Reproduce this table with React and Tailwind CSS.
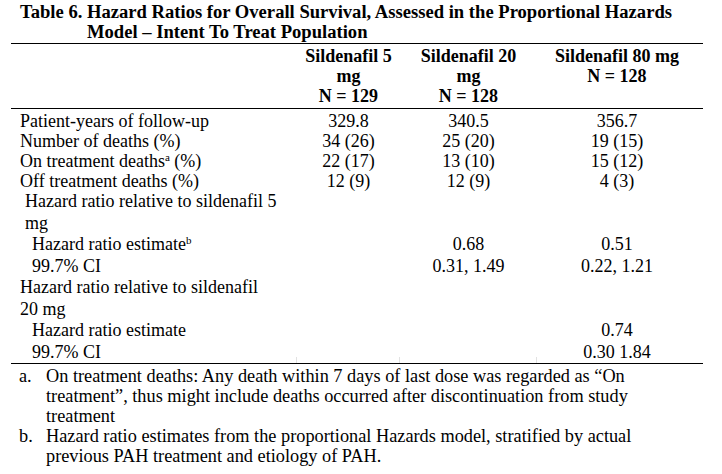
const rowsTop = [
  { label: "Patient-years of follow-up", v: ["329.8", "340.5", "356.7"] },
  { label: "Number of deaths (%)", v: ["34 (26)", "25 (20)", "19 (15)"] },
  { label: <>On treatment deaths<sup className="text-[11px] relative -top-[6px]">a</sup> (%)</>, v: ["22 (17)", "13 (10)", "15 (12)"] },
  { label: "Off treatment deaths (%)", v: ["12 (9)", "12 (9)", "4 (3)"] },
];

const Cell = ({ children }) => <div className="text-center">{children}</div>;

const App = () => {
  return (
    <div className="w-[722px] h-[474px] bg-white overflow-hidden text-black font-['Liberation_Serif','Times_New_Roman',serif] text-[18px]">
      <h1 className="font-bold text-[18.6px] leading-5 pt-[2px] whitespace-nowrap">
        <span className="block pl-[20px]">Table 6. Hazard Ratios for Overall Survival, Assessed in the Proportional Hazards</span>
        <span className="block pl-[87px]">Model – Intent To Treat Population</span>
      </h1>

      <div className="ml-[11px] w-[692px]">
        <div className="h-px bg-black mt-[1px]" />

        {/* header */}
        <div className="grid grid-cols-[286px_103px_137px_160px] font-bold leading-5 pt-[2px] pb-[2px]">
          <div />
          <Cell>Sildenafil 5<br />mg<br />N = 129</Cell>
          <Cell>Sildenafil 20<br />mg<br />N = 128</Cell>
          <Cell>Sildenafil 80 mg<br />N = 128</Cell>
        </div>
        <div className="h-px bg-black" />

        {/* body */}
        <div className="grid grid-cols-[286px_103px_137px_160px] leading-5 pt-[2px]">
          {rowsTop.map((r, i) => (
            <div key={i} className="contents">
              <div className="pl-[9px]">{r.label}</div>
              <Cell>{r.v[0]}</Cell>
              <Cell>{r.v[1]}</Cell>
              <Cell>{r.v[2]}</Cell>
            </div>
          ))}
        </div>
        <div className="grid grid-cols-[286px_103px_137px_160px] leading-[21.5px]">
          <div className="pl-[14px]">Hazard ratio relative to sildenafil 5<br />mg</div>
          <Cell />
          <Cell />
          <Cell />

          <div className="pl-[21px]">Hazard ratio estimate<sup className="text-[11px] relative -top-[6px]">b</sup></div>
          <Cell />
          <Cell>0.68</Cell>
          <Cell>0.51</Cell>

          <div className="pl-[21px]">99.7% CI</div>
          <Cell />
          <Cell>0.31, 1.49</Cell>
          <Cell>0.22, 1.21</Cell>

          <div className="pl-[9px]">Hazard ratio relative to sildenafil<br />20 mg</div>
          <Cell />
          <Cell />
          <Cell />

          <div className="pl-[21px]">Hazard ratio estimate</div>
          <Cell />
          <Cell />
          <Cell>0.74</Cell>

          <div className="pl-[21px] relative">
            99.7% CI
            <span className="absolute right-0 bottom-0 h-[6px] w-px bg-[#e2e2e2]" />
          </div>
          <div className="relative">
            <span className="absolute right-0 bottom-0 h-[6px] w-px bg-[#e2e2e2]" />
          </div>
          <div className="relative">
            <span className="absolute right-0 bottom-0 h-[6px] w-px bg-[#e2e2e2]" />
          </div>
          <Cell>0.30 1.84</Cell>
        </div>
        <div className="h-px bg-black" />

        {/* footnotes */}
        <div className="leading-5 pl-[8px] pt-[2px] text-[18.3px] whitespace-nowrap">
          <div className="flex">
            <span className="w-[27px] shrink-0">a.</span>
            <span>
              On treatment deaths: Any death within 7 days of last dose was regarded as “On<br />
              treatment”, thus might include deaths occurred after discontinuation from study<br />
              treatment
            </span>
          </div>
          <div className="flex">
            <span className="w-[27px] shrink-0">b.</span>
            <span>
              Hazard ratio estimates from the proportional Hazards model, stratified by actual<br />
              previous PAH treatment and etiology of PAH.
            </span>
          </div>
        </div>
      </div>
    </div>
  );
};

export default App;
